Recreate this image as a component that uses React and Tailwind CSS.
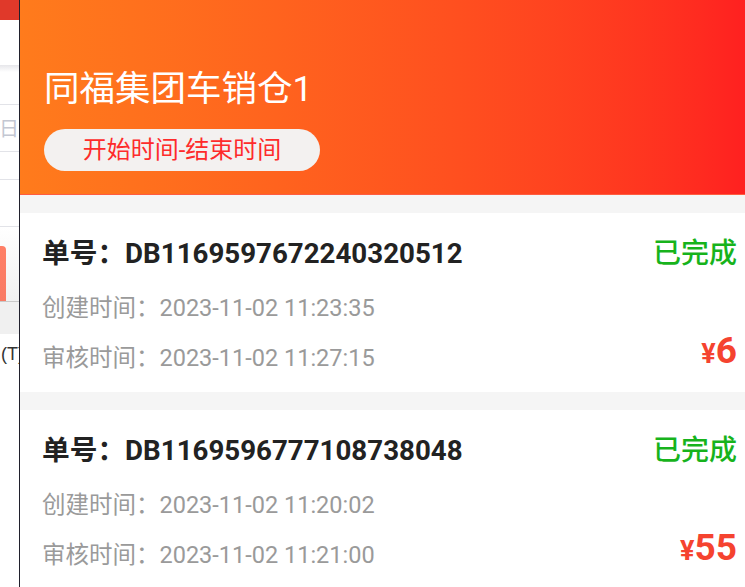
import React from "react";

const orders = [
  {
    no: "DB1169597672240320512",
    created: "2023-11-02 11:23:35",
    audited: "2023-11-02 11:27:15",
    amount: "6",
  },
  {
    no: "DB1169596777108738048",
    created: "2023-11-02 11:20:02",
    audited: "2023-11-02 11:21:00",
    amount: "55",
  },
];

function Card({ o }) {
  return (
    <div className="bg-white pl-[22px] pr-[8px] pt-[23px] pb-[16px] flex flex-col">
      <div className="h-[36px] flex items-center justify-between">
        <div className="text-[27.7px] font-bold text-[#222222] leading-[36px] whitespace-nowrap">
          单号：{o.no}
        </div>
        <div className="text-[28px] font-medium text-[#17b31c] leading-[36px]">已完成</div>
      </div>
      <div className="mt-[18px] h-[36px] flex items-center text-[23.5px] text-[#9a9a9a] leading-[36px] whitespace-nowrap">
        创建时间：{o.created}
      </div>
      <div className="mt-[14px] h-[36px] flex items-center justify-between leading-[36px]">
        <div className="text-[23.5px] text-[#9a9a9a] whitespace-nowrap">审核时间：{o.audited}</div>
        <div className="text-[#f5432f] font-bold whitespace-nowrap -mt-[8px]">
          <span className="text-[27px]">¥</span>
          <span className="text-[37px]">{o.amount}</span>
        </div>
      </div>
    </div>
  );
}

export default function App() {
  return (
    <div className="w-[745px] h-[587px] overflow-hidden flex font-['Roboto','Noto_Sans_CJK_SC',sans-serif]">
      {/* background page strip */}
      <div className="w-[19px] shrink-0 h-full overflow-hidden flex flex-col bg-white">
        <div className="h-[20px] bg-[#e0392a]" />
        <div className="h-[45px] bg-white" />
        <div className="h-[7px] bg-gradient-to-b from-[#e6e6ea] to-white" />
        <div className="h-[33px] bg-white border-b border-[#e2e3e8]" />
        <div className="h-[47px] bg-white border-b border-[#e2e3e8] flex items-center overflow-hidden">
          <span className="text-[20px] text-[#c3c7d2] ml-[-1px] leading-none font-['Noto_Sans_CJK_SC',sans-serif]">日</span>
        </div>
        <div className="h-[28px] bg-white border-b border-[#e2e3e8]" />
        <div className="h-[47px] bg-white border-b border-[#e2e3e8]" />
        <div className="h-[75px] bg-gradient-to-b from-white to-[#f1f1f1] flex flex-col justify-end border-b border-[#c9c9c9]">
          <div className="w-[6px] h-[55px] bg-gradient-to-b from-[#ff7f66] to-[#f97a64] rounded-tr-[4px]" />
        </div>
        <div className="h-[32px] bg-[#f0f0f0]" />
        <div className="pt-[8px] pl-[1px] text-[18px] leading-[24px] text-[#333] font-['Liberation_Sans',sans-serif] whitespace-nowrap">(T)</div>
      </div>
      <div className="w-[1px] shrink-0 h-full bg-[#20202c]" />
      {/* drawer */}
      <div className="flex-1 h-full bg-[#f5f5f5] flex flex-col gap-[18px]">
        <div className="h-[195px] shrink-0 bg-gradient-to-r from-[#ff7b1c] to-[#ff2020] border-b border-[#ff5c40] px-[24px] pt-[69px]">
          <div className="text-[35.5px] leading-[40px] text-white whitespace-nowrap">同福集团车销仓1</div>
          <div className="mt-[20px] w-[276px] h-[42px] rounded-full bg-[#f3f1f0] flex items-center justify-center text-[24px] text-[#fe2b2b] whitespace-nowrap">
            开始时间-结束时间
          </div>
        </div>
        {orders.map((o) => (
          <Card key={o.no} o={o} />
        ))}
      </div>
    </div>
  );
}
